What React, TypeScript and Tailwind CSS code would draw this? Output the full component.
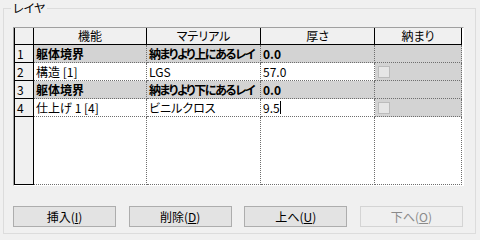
const rows = [
  { n: 1, func: "躯体境界", mat: "納まりより上にあるレイ", th: "0.0", core: true },
  { n: 2, func: "構造 [1]", mat: "LGS", th: "57.0", check: true },
  { n: 3, func: "躯体境界", mat: "納まりより下にあるレイ", th: "0.0", core: true },
  { n: 4, func: "仕上げ 1 [4]", mat: "ビニルクロス", th: "9.5", check: true, editing: true },
];

const buttons = [
  { label: "挿入", key: "I" },
  { label: "削除", key: "D" },
  { label: "上へ", key: "U" },
  { label: "下へ", key: "O", disabled: true },
];

const grid = "grid grid-cols-[20px_113px_114px_114px_87px]";
const rowHead = "border-l border-r border-b border-black bg-[#f0f0f0]";
const cell = "border-r border-b border-dotted border-[#6e6e6e] overflow-hidden whitespace-nowrap pl-[2px] flex items-center";

export default function App() {
  return (
    <div className="w-[480px] h-[240px] bg-[#f0f0f0] text-[12px] leading-[16px] text-black font-['Noto_Sans_CJK_JP',sans-serif] [font-feature-settings:'palt']">
      <fieldset className="ml-[3px] w-[473px] h-[234px] border border-[#dcdcdc] pl-[9px] flex flex-col">
        <legend className="-ml-[2px] px-[2px]">レイヤ</legend>

        {/* layer table */}
        <div className="mt-[11px] w-[451px] h-[159px] border border-t-[#a0a0a0] border-l-[#a0a0a0] border-r-white border-b-white bg-white flex flex-col">
          <div className={`${grid} h-[17px]`}>
            <div className="border-l border-r border-b border-black bg-[#f0f0f0]" />
            {["機能", "マテリアル", "厚さ", "納まり"].map((h) => (
              <div key={h} className="border-r border-b border-black bg-[#f0f0f0] text-center">
                {h}
              </div>
            ))}
          </div>

          {rows.map((r) => {
            const bg = r.core ? "bg-[#d3d3d3] font-bold" : "bg-white";
            return (
              <div key={r.n} className={`${grid} h-[18px]`}>
                <div className={`${rowHead} pl-[2px] flex items-center`}>{r.n}</div>
                <div className={`${cell} ${bg}`}>{r.func}</div>
                <div className={`${cell} ${bg} ${r.core ? "tracking-[-1.4px]" : ""}`}>{r.mat}</div>
                <div className={`${cell} ${bg}`}>
                  {r.th}
                  {r.editing && <span className="inline-block w-px h-[13px] bg-black" />}
                </div>
                <div className={`${cell} bg-[#d3d3d3]`}>
                  {r.check && (
                    <span className="ml-px w-[12px] h-[12px] border border-[#bcbcbc] bg-[#e6e6e6]" />
                  )}
                </div>
              </div>
            );
          })}

          <div className={`${grid} flex-1`}>
            <div className={rowHead} />
            <div className={cell} />
            <div className={cell} />
            <div className={cell} />
            <div className={cell} />
          </div>
        </div>

        <div className="mt-[20px] w-[450px] flex justify-between">
          {buttons.map((b) => (
            <button
              key={b.key}
              disabled={b.disabled}
              className={
                b.disabled
                  ? "w-[103px] h-[21px] border border-[#d4d4d4] bg-[#efefef] text-[#8a8a8a]"
                  : "w-[103px] h-[21px] border border-[#adadad] bg-[#e3e3e3]"
              }
            >
              {b.label}(<span className="underline">{b.key}</span>)
            </button>
          ))}
        </div>
      </fieldset>
    </div>
  );
}
